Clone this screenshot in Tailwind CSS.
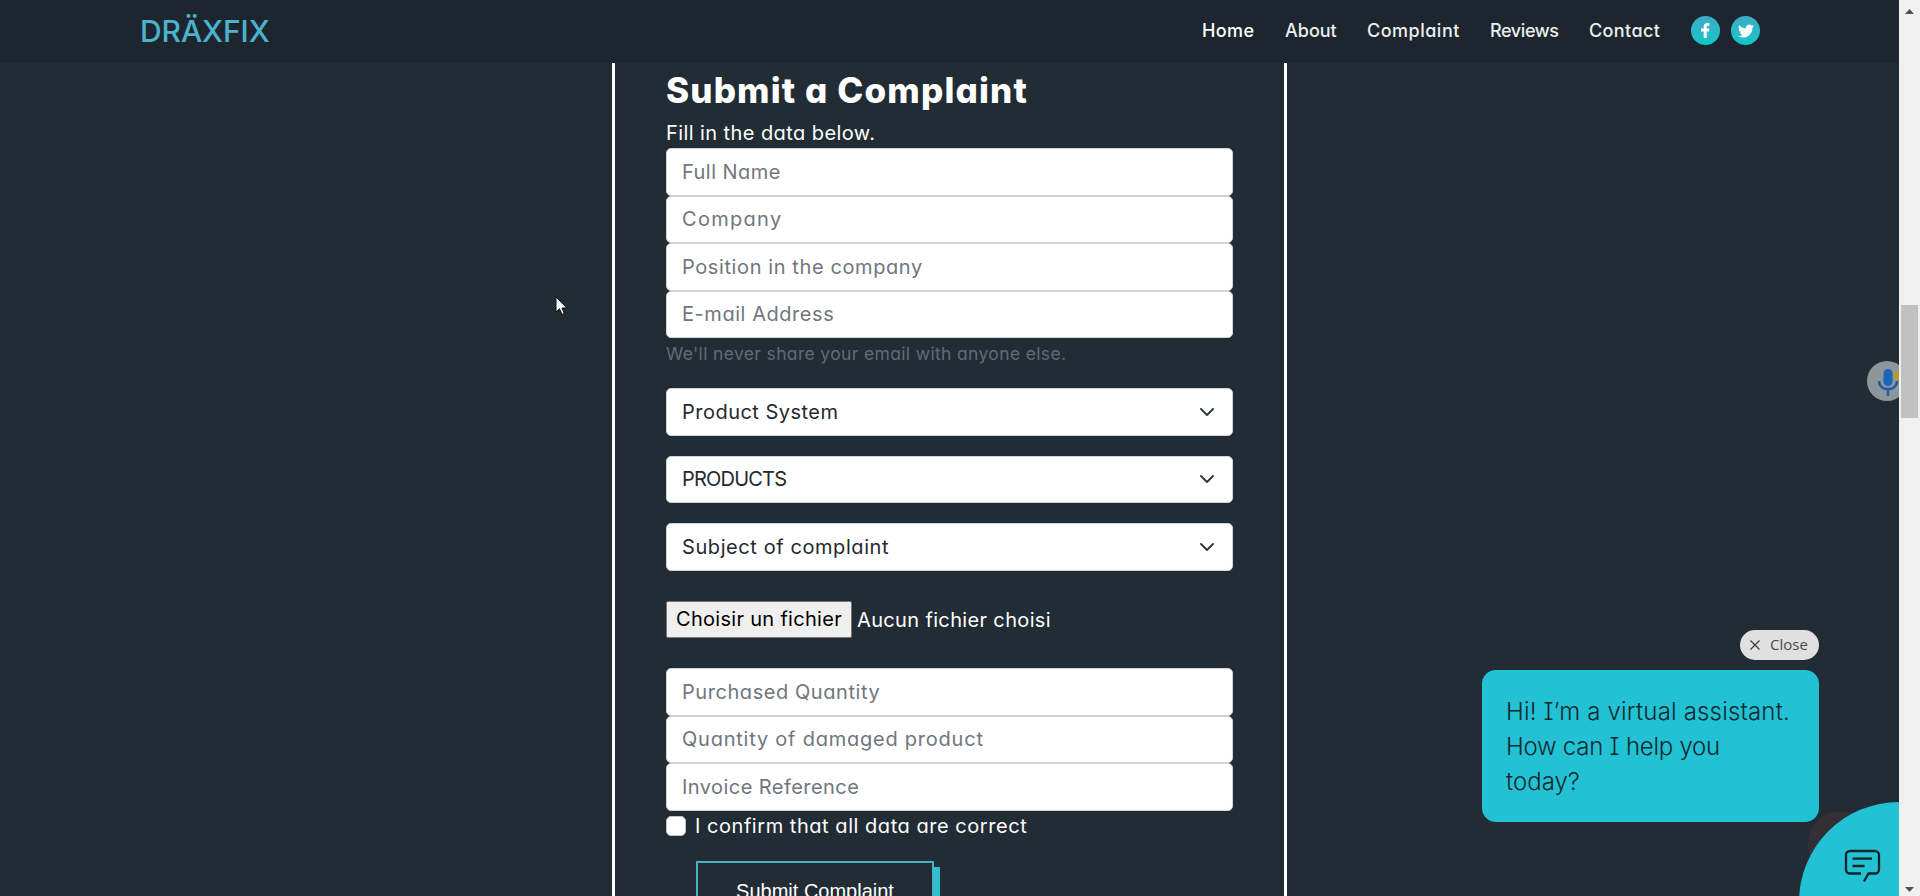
<!DOCTYPE html>
<html lang="en">
<head>
<meta charset="utf-8">
<title>DRÄXFIX</title>
<script src="https://cdn.jsdelivr.net/npm/@tailwindcss/browser@4"></script>
</head>
<body class="h-[896px] overflow-hidden bg-[#212c35] font-['Inter',sans-serif] [font-feature-settings:'cv11'] text-white">
<div class="flex h-[896px]">
  <div class="relative flex h-full w-[1899px] shrink-0 flex-col overflow-hidden">
    <header class="flex h-[63px] shrink-0 items-center justify-between bg-[#1d262e] pl-[140px] pr-[139px] text-[18px] font-medium text-[#eceeef]">
      <div class="-mt-0.5 text-[30px] leading-[44px] tracking-[-0.1px] text-[#4db2ce]">DRÄXFIX</div>
      <nav class="flex items-center gap-[30px] whitespace-nowrap pb-[2px]">
        <a class="w-[53px] tracking-[0.4px] text-white">Home</a>
        <a class="w-[52px]">About</a>
        <a class="w-[93px] tracking-[0.5px]">Complaint</a>
        <a class="w-[69px] tracking-[-0.4px]">Reviews</a>
        <a class="w-[72px] tracking-[0.4px]">Contact</a>
        <div class="flex gap-[11px]">
          <span class="flex size-[29px] items-center justify-center rounded-full bg-linear-to-b from-[#3cabc8] to-[#06c6c8]">
            <svg class="h-[15px] w-[9px]" viewBox="0 0 9 15" fill="#fff"><path d="M2.7 15V8.6H0V5.6h2.7V3.7C2.7 1.3 4 0 6.300 0c1 0 2.200.2 2.200.2v2.500H7.200c-1.200 0-1.500.7-1.500 1.400v1.500h2.700L8 8.600H5.700V15z"/></svg>
          </span>
          <span class="flex size-[29px] items-center justify-center rounded-full bg-linear-to-b from-[#3cabc8] to-[#06c6c8]">
            <svg class="size-[16px]" viewBox="0 0 24 24" fill="#fff"><path d="M24 4.560a9.800 9.800 0 0 1-2.830.780 4.930 4.930 0 0 0 2.170-2.730 9.900 9.900 0 0 1-3.130 1.200 4.920 4.920 0 0 0-8.390 4.480A13.980 13.980 0 0 1 1.670 3.150a4.930 4.930 0 0 0 1.520 6.570 4.900 4.900 0 0 1-2.230-.61v.06a4.930 4.930 0 0 0 3.950 4.830 4.900 4.900 0 0 1-2.220.08 4.930 4.930 0 0 0 4.600 3.420A9.900 9.900 0 0 1 0 19.540a13.940 13.940 0 0 0 7.550 2.210c9.140 0 14.310-7.720 13.990-14.640A10 10 0 0 0 24 4.560z"/></svg>
          </span>
        </div>
      </nav>
    </header>

    <main class="flex flex-1 border-b border-[#181d27] pl-[612px]">
      <form class="flex w-[675px] flex-col border-x-[3px] border-white pl-[51px] pr-[51px] pt-[6px] text-[20px]">
        <h2 class="h-[42px] whitespace-nowrap text-[35px] font-extrabold leading-[42px] tracking-[1.150px]">Submit a Complaint</h2>
        <p class="mt-1.5 h-[31px] pt-px leading-[31px] tracking-[0.42px]">Fill in the data below.</p>
        <div class="text-[#70767c]">
          <div class="flex h-[47.500px] items-center rounded-[5px] border border-[#ced4da] bg-white pl-[15px] tracking-[0.450px]">Full Name</div>
          <div class="flex h-[47.500px] items-center rounded-[5px] border border-[#ced4da] bg-white pl-[15px] tracking-[1.300px]">Company</div>
          <div class="flex h-[47.500px] items-center rounded-[5px] border border-[#ced4da] bg-white pl-[15px] tracking-[0.600px]">Position in the company</div>
          <div class="flex h-[47.500px] items-center rounded-[5px] border border-[#ced4da] bg-white pl-[15px] tracking-[0.550px]">E-mail Address</div>
        </div>
        <p class="h-[31px] whitespace-nowrap text-[17.500px] leading-[31px] tracking-[0.350px] text-[#626b74]">We'll never share your email with anyone else.</p>
        <div class="mt-[19px] flex flex-col gap-5 text-[#24292e]">
          <div class="flex h-[47.500px] items-center justify-between rounded-[5px] border border-[#ced4da] bg-white pl-[15px] pr-[17px] tracking-[0.480px]">Product System
            <svg class="h-4 w-4" viewBox="0 0 16 16" fill="none" stroke="#343a40" stroke-width="2" stroke-linecap="round" stroke-linejoin="round"><path d="M2 5l6 6 6-6"/></svg></div>
          <div class="flex h-[47.500px] items-center justify-between rounded-[5px] border border-[#ced4da] bg-white pl-[15px] pr-[17px] tracking-[-0.800px]">PRODUCTS
            <svg class="h-4 w-4" viewBox="0 0 16 16" fill="none" stroke="#343a40" stroke-width="2" stroke-linecap="round" stroke-linejoin="round"><path d="M2 5l6 6 6-6"/></svg></div>
          <div class="flex h-[47.500px] items-center justify-between rounded-[5px] border border-[#ced4da] bg-white pl-[15px] pr-[17px] tracking-[0.580px]">Subject of complaint
            <svg class="h-4 w-4" viewBox="0 0 16 16" fill="none" stroke="#343a40" stroke-width="2" stroke-linecap="round" stroke-linejoin="round"><path d="M2 5l6 6 6-6"/></svg></div>
        </div>
        <div class="mt-[30.500px] flex h-[37px] items-center whitespace-nowrap tracking-[0.300px]">
          <span class="flex h-[37px] w-[186px] items-center justify-center rounded-[2px] border border-[#767676] bg-[#efefef] pb-px text-black">Choisir un fichier</span>
          <span class="ml-[5px] tracking-[0.350px]">Aucun fichier choisi</span>
        </div>
        <div class="mt-[30px] text-[#70767c]">
          <div class="flex h-[47.500px] items-center rounded-[5px] border border-[#ced4da] bg-white pl-[15px] tracking-[0.560px]">Purchased Quantity</div>
          <div class="flex h-[47.500px] items-center rounded-[5px] border border-[#ced4da] bg-white pl-[15px] tracking-[0.770px]">Quantity of damaged product</div>
          <div class="flex h-[47.500px] items-center rounded-[5px] border border-[#ced4da] bg-white pl-[15px] tracking-[0.440px]">Invoice Reference</div>
        </div>
        <label class="flex h-[30.500px] items-center gap-[9px] whitespace-nowrap tracking-[0.540px]">
          <span class="size-5 rounded-[5px] border border-[#bfc4c9] bg-white"></span>I confirm that all data are correct
        </label>
        <div class="ml-[30px] mt-5 flex h-[70px] w-[238px] shrink-0 justify-center border-2 border-[#45b3c4] bg-[#212c35] pt-[15px] font-['Liberation_Sans',sans-serif] text-[20px] leading-[26px] shadow-[6px_6px_0_#33bdd0]">Submit Complaint</div>
      </form>
    </main>

    <!-- floating widgets -->
    <svg class="absolute left-[555px] top-[296px] h-[21px] w-[13px]" viewBox="0 0 13 21"><path d="M1 1v15l3.500-3.200L7 18.500l2.300-1L7 12h4.800z" fill="#fff" stroke="#0b1016" stroke-width="1"/></svg>
    <svg class="absolute left-[1867px] top-[361px] size-10" viewBox="0 0 40 40"><circle cx="20" cy="20" r="20" fill="#8d969b"/><path d="M27 10h8v9h-8z" fill="#b89a32"/><rect x="16.500" y="8" width="9" height="17" rx="4.500" fill="#1b66b8"/><path d="M12 20c0 11 18 11 18 0M21 28v7" stroke="#1f5fa3" stroke-width="2.500" fill="none"/></svg>
    <div class="absolute left-[1740px] top-[630px] flex h-[30px] w-[79px] items-center gap-[10px] rounded-full bg-[#e0e0e0] pl-[10px] font-['Open_Sans',sans-serif] text-[15px] text-[#4a4a4a]">
      <svg class="size-[10px]" viewBox="0 0 10 10" stroke="#3c3c3c" stroke-width="1.200"><path d="M.5.5l9 9M9.500.5l-9 9"/></svg><span class="-mt-px">Close</span>
    </div>
    <div class="absolute left-[1482px] top-[670px] h-[152px] w-[337px] whitespace-nowrap rounded-[14px] bg-[#22c1d3] pl-[24px] pt-[24px] text-[24px] font-light leading-[35px] text-[#10292f] [font-feature-settings:'cv08']">
      <p class="tracking-[0.170px]">Hi! I’m a virtual assistant.</p><p class="tracking-[-0.250px]">How can I help you</p><p>today?</p>
    </div>
    <svg class="absolute left-[1799px] top-[802px] h-[94px] w-[100px]" viewBox="0 0 100 94"><circle cx="42" cy="42" r="33" fill="#332f35"/><circle cx="100" cy="100" r="100" fill="#22c1d3"/><path d="M62 71.500H51a4 4 0 0 1-4-4V53a4 4 0 0 1 4-4h25a4 4 0 0 1 4 4v14.500a4 4 0 0 1-4 4h-6.500L65 79.500M53.500 56.700h19.500M53.500 64h12" fill="none" stroke="#0f2329" stroke-width="2.300"/></svg>
  </div>

  <!-- scrollbar -->
  <aside class="flex h-full w-[21px] flex-col items-center bg-[#f0f0f0] pr-[1px] pt-[9px]">
    <svg class="h-[5px] w-[9px]" viewBox="0 0 9 5"><path d="M0 5L4.500 0 9 5z" fill="#505050"/></svg>
    <div class="mt-[291px] h-[113px] w-[17px] bg-[#c1c1c1]"></div>
    <svg class="mt-[469px] h-[5px] w-[9px]" viewBox="0 0 9 5"><path d="M0 0L4.500 5 9 0z" fill="#505050"/></svg>
  </aside>
</div>
</body>
</html>
